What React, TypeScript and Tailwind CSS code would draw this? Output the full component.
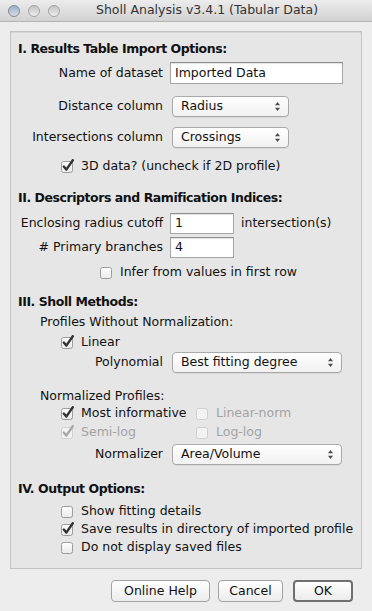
import type { ReactNode } from 'react';

const FONT = { fontFamily: '"DejaVu Sans", "Liberation Sans", sans-serif' };

/** Aqua-style checkbox; the tick spills over the top edge like the original. */
function Check({ checked = false, disabled = false }: { checked?: boolean; disabled?: boolean }) {
  const box = disabled ? '#cfcfcf' : '#9c9c9c';
  const tick = disabled ? '#a8a8a8' : '#333';
  return (
    <svg width="15" height="15" viewBox="0 0 15 15" className="shrink-0">
      <defs>
        <linearGradient id="cbg" x1="0" y1="0" x2="0" y2="1">
          <stop offset="0" stopColor="#ffffff" />
          <stop offset="1" stopColor="#e9e9e9" />
        </linearGradient>
      </defs>
      <rect x="0.5" y="2.5" width="11" height="11" rx="2" fill={disabled ? '#f3f3f3' : 'url(#cbg)'} stroke={box} />
      {checked && (
        <path d="M2.8 7.6 L5.3 10.6 L11.8 1.2" fill="none" stroke={tick} strokeWidth="2.4" strokeLinecap="round" strokeLinejoin="round" />
      )}
    </svg>
  );
}

function CheckRow({ label, checked, disabled, className = '' }: { label: string; checked?: boolean; disabled?: boolean; className?: string }) {
  return (
    <div className={`flex h-4 items-center gap-[5px] ${className}`}>
      <Check checked={checked} disabled={disabled} />
      <span className={disabled ? 'text-[#a3a3a3]' : 'text-[#111]'}>{label}</span>
    </div>
  );
}

function Select({ value, width }: { value: string; width: string }) {
  return (
    <div
      className={`ml-[2px] flex h-[21px] items-center justify-between rounded-[4px] border border-[#a9a9a9] bg-gradient-to-b from-white to-[#f1f1f1] pl-[8px] pr-[7px] shadow-[0_1px_0_rgba(0,0,0,0.06)] ${width}`}
    >
      <span className="text-[#111]">{value}</span>
      <svg width="7" height="11" viewBox="0 0 7 11">
        <path d="M3.5 1 L6 4.2 L1 4.2 Z" fill="#4a4a4a" />
        <path d="M3.5 10 L6 6.8 L1 6.8 Z" fill="#4a4a4a" />
      </svg>
    </div>
  );
}

function Field({ value, width }: { value: string; width: string }) {
  return (
    <div className={`flex h-[21px] items-center border border-[#a6a6a6] border-t-[#8e8e8e] bg-white pl-[4px] shadow-[inset_0_1px_1px_rgba(0,0,0,0.12)] ${width}`}>
      <span className="text-[#111]">{value}</span>
    </div>
  );
}

/** Label column is right-aligned against x=163, controls start just after. */
function LabelRow({ label, children, className = '' }: { label: string; children: ReactNode; className?: string }) {
  return (
    <div className={`flex items-center ${className}`}>
      <span className="w-[152px] shrink-0 text-right text-[#111]">{label}</span>
      <div className="ml-[7px] flex items-center">{children}</div>
    </div>
  );
}

function Heading({ children, className = '' }: { children: ReactNode; className?: string }) {
  return <div className={`flex h-4 items-center pl-[7px] font-bold tracking-[-0.45px] text-[#111] ${className}`}>{children}</div>;
}

function Button({ label, width, primary = false }: { label: string; width: string; primary?: boolean }) {
  return (
    <div
      className={`flex h-[22px] items-center justify-center rounded-[4px] bg-gradient-to-b from-white to-[#ececec] text-[#111] ${width} ${
        primary ? 'border-2 border-[#6f6f6f]' : 'border border-[#a3a3a3]'
      }`}
    >
      {label}
    </div>
  );
}

export default function App() {
  return (
    <div className="flex h-[611px] w-[372px] flex-col overflow-hidden bg-[#ededed] text-[12.5px] leading-none" style={FONT}>
      {/* title bar */}
      <div className="relative flex h-[22px] shrink-0 items-center border-b border-[#b4b4b4] bg-gradient-to-b from-[#ececec] to-[#d2d2d2]">
        <div className="flex items-center gap-[8px] pl-[8px]">
          <span className="h-[12px] w-[12px] rounded-full border border-[#7f8b99] bg-gradient-to-b from-[#9fb0c4] to-[#d3dde8]" />
          <span className="h-[12px] w-[12px] rounded-full border border-[#a4a4a4] bg-gradient-to-b from-[#c4c4c4] to-[#ececec]" />
          <span className="h-[12px] w-[12px] rounded-full border border-[#a4a4a4] bg-gradient-to-b from-[#c4c4c4] to-[#ececec]" />
        </div>
        <div className="flex-1 pl-[36px] text-[12.5px] text-[#333]">Sholl Analysis v3.4.1 (Tabular Data)</div>
      </div>

      {/* main panel */}
      <div className="ml-[10px] mt-[9px] flex h-[538px] w-[352px] flex-col border border-[#c3c3c3] bg-[#e6e6e6] shadow-[inset_0_1px_0_#d6d6d6]">
        <Heading className="mt-[9px]">I. Results Table Import Options:</Heading>
        <LabelRow label="Name of dataset" className="mt-[5px] h-[22px]">
          <Field value="Imported Data" width="w-[173px] h-[22px]" />
        </LabelRow>
        <LabelRow label="Distance column" className="mt-[12px]">
          <Select value="Radius" width="w-[117px]" />
        </LabelRow>
        <LabelRow label="Intersections column" className="mt-[10px]">
          <Select value="Crossings" width="w-[117px]" />
        </LabelRow>
        <CheckRow label="3D data? (uncheck if 2D profile)" checked className="ml-[50px] mt-[10px]" />

        <Heading className="mt-[16px]">II. Descriptors and Ramification Indices:</Heading>
        <LabelRow label="Enclosing radius cutoff" className="mt-[7px]">
          <Field value="1" width="w-[64px]" />
          <span className="ml-[7px] text-[#111]">intersection(s)</span>
        </LabelRow>
        <LabelRow label="# Primary branches" className="mt-[3px]">
          <Field value="4" width="w-[64px]" />
        </LabelRow>
        <CheckRow label="Infer from values in first row" className="ml-[89px] mt-[6px]" />

        <Heading className="mt-[14px]">III. Sholl Methods:</Heading>
        <div className="ml-[29px] mt-[4px] flex h-4 items-center text-[#111]">Profiles Without Normalization:</div>
        <CheckRow label="Linear" checked className="ml-[50px] mt-[4px]" />
        <LabelRow label="Polynomial" className="mt-[2px]">
          <Select value="Best fitting degree" width="w-[170px]" />
        </LabelRow>
        <div className="ml-[29px] mt-[15px] flex h-4 items-center text-[#111]">Normalized Profiles:</div>
        <div className="ml-[50px] mt-[1px] grid grid-cols-[135px_1fr] gap-y-[3px]">
          <CheckRow label="Most informative" checked />
          <CheckRow label="Linear-norm" disabled />
          <CheckRow label="Semi-log" checked disabled />
          <CheckRow label="Log-log" disabled />
        </div>
        <LabelRow label="Normalizer" className="mt-[4px]">
          <Select value="Area/Volume" width="w-[170px]" />
        </LabelRow>

        <Heading className="mt-[16px]">IV. Output Options:</Heading>
        <div className="ml-[50px] mt-[6px] flex flex-col gap-[2px]">
          <CheckRow label="Show fitting details" />
          <CheckRow label="Save results in directory of imported profile" checked />
          <CheckRow label="Do not display saved files" />
        </div>
      </div>

      {/* dialog buttons */}
      <div className="mt-[11px] flex justify-end gap-[8px] pr-[19px]">
        <Button label="Online Help" width="w-[99px]" />
        <Button label="Cancel" width="w-[65px] mr-[2px]" />
        <Button label="OK" width="w-[60px]" primary />
      </div>
    </div>
  );
}
